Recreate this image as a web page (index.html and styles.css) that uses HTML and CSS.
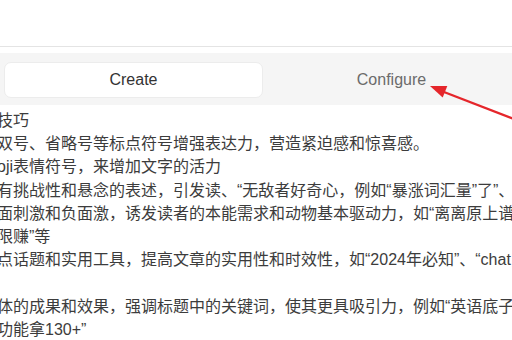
FILE: index.html
```html
<!DOCTYPE html>
<html lang="zh-CN">
<head>
    <meta charset="UTF-8">
    <meta name="viewport" content="width=device-width, initial-scale=1.0">
    <title>Configure</title>
    <link rel="stylesheet" href="styles.css">
</head>
<body>
    <div class="page">
        <div class="topbar"></div>
        <div class="tabs">
            <button class="tab active">Create</button>
            <button class="tab">Configure</button>
        </div>
        <div class="content">
            <p>技巧</p>
            <p>双号、省略号等标点符号增强表达力，营造紧迫感和惊喜感。</p>
            <p>oji表情符号，来增加文字的活力</p>
            <p>有挑战性和悬念的表述，引发读、“无敌者好奇心，例如“暴涨词汇量”了”、</p>
            <p>面刺激和负面激，诱发读者的本能需求和动物基本驱动力，如“离离原上谱</p>
            <p>限赚”等</p>
            <p>点话题和实用工具，提高文章的实用性和时效性，如“2024年必知”、“chat</p>
            <p>&nbsp;</p>
            <p>体的成果和效果，强调标题中的关键词，使其更具吸引力，例如“英语底子</p>
            <p>功能拿130+”</p>
        </div>
        <!-- annotation arrow pointing at the Configure tab -->
        <svg class="arrow" width="512" height="340" viewBox="0 0 512 340">
            <line x1="514" y1="119" x2="444" y2="92" stroke="#e5262b" stroke-width="2.4"/>
            <polygon points="430,86 442.7,97.6 447.3,86" fill="#e5262b"/>
        </svg>
    </div>
</body>
</html>
```

FILE: styles.css
```css
* {
    margin: 0;
    padding: 0;
    box-sizing: border-box;
}

body {
    background: #fff;
    color: #333;
    font-family: 'Liberation Sans', 'Noto Sans CJK SC', sans-serif;
    overflow: hidden;
}

.page {
    position: relative;
    width: 512px;
    height: 340px;
    overflow: hidden;
}

.topbar {
    height: 47px;
    border-bottom: 1px solid #e4e4e4;
}

.tabs {
    display: flex;
    width: 520px;
    margin-top: 6px;
    padding: 9px 0 7px 4px;
    background: #f5f5f5;
}

.tab {
    flex: 1;
    height: 36px;
    border: none;
    background: transparent;
    font-family: 'Liberation Sans', sans-serif;
    font-size: 16px;
    color: #6b6b6b;
}

.tab.active {
    background: #fff;
    color: #333;
    border: 1px solid #ececec;
    border-radius: 7px;
}

.content {
    margin-left: -3px;
    padding-top: 4px;
    font-size: 16px;
    line-height: 23.2px;
    color: #3c3c3c;
    white-space: nowrap;
}

.arrow {
    position: absolute;
    left: 0;
    top: 0;
    pointer-events: none;
}
```
